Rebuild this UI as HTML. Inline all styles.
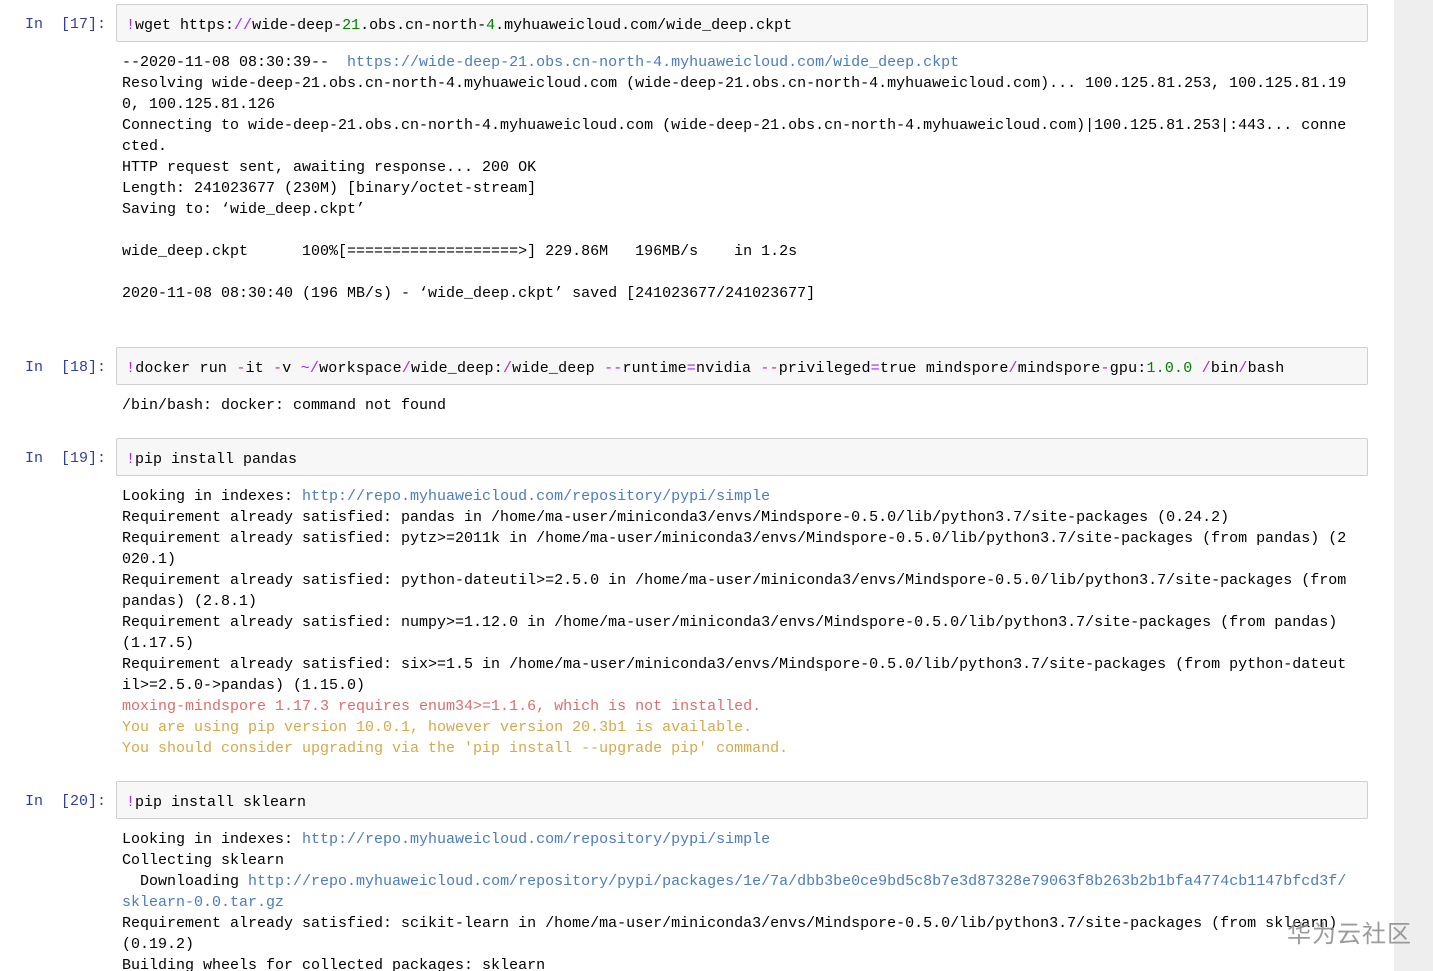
<!DOCTYPE html>
<html><head><meta charset="utf-8"><style>
html,body{margin:0;padding:0;background:#fff;width:1433px;height:971px;overflow:hidden;position:relative}
.mono{font-family:"Liberation Mono","Noto Sans CJK SC",monospace;font-size:15px;color:#000;white-space:pre}
.prompt{position:absolute;left:0;width:106px;text-align:right;color:#303f9f;font-family:"Liberation Mono",monospace;font-size:15px;white-space:pre;line-height:21px}
.box{position:absolute;left:116px;width:1250px;height:36px;background:#f7f7f7;border:1px solid #cfcfcf;border-radius:2px}
.box .mono{position:absolute;left:9px;top:10px;line-height:21px}
.out{position:absolute;left:122px;line-height:21px}
.p{color:#aa22ff}.g{color:#008000}.u{color:#4a7cbf}.r{color:#d9534f;opacity:.85}.y{color:#d4a94a}
.side{position:absolute;left:1394px;top:0;width:39px;height:971px;background:#eeeeee}
.wm{position:absolute;left:1287px;top:914px;font-family:"Noto Sans CJK SC",sans-serif;font-size:24px;color:#8a8a8a;opacity:.85;letter-spacing:1px}
</style></head><body>
<div class="side"></div>

<div class="prompt" style="top:14px">In  [17]:</div>
<div class="box" style="top:4px"><div class="mono"><span class="p">!</span>wget https:<span class="p">//</span>wide-deep-<span class="g">21</span>.obs.cn-north-<span class="g">4</span>.myhuaweicloud.com/wide_deep.ckpt</div></div>
<div class="out mono" style="top:52px">--2020-11-08 08:30:39--  <span class="u">https://wide-deep-21.obs.cn-north-4.myhuaweicloud.com/wide_deep.ckpt</span>
Resolving wide-deep-21.obs.cn-north-4.myhuaweicloud.com (wide-deep-21.obs.cn-north-4.myhuaweicloud.com)... 100.125.81.253, 100.125.81.19
0, 100.125.81.126
Connecting to wide-deep-21.obs.cn-north-4.myhuaweicloud.com (wide-deep-21.obs.cn-north-4.myhuaweicloud.com)|100.125.81.253|:443... conne
cted.
HTTP request sent, awaiting response... 200 OK
Length: 241023677 (230M) [binary/octet-stream]
Saving to: ‘wide_deep.ckpt’

wide_deep.ckpt      100%[===================>] 229.86M   196MB/s    in 1.2s

2020-11-08 08:30:40 (196 MB/s) - ‘wide_deep.ckpt’ saved [241023677/241023677]</div>

<div class="prompt" style="top:357px">In  [18]:</div>
<div class="box" style="top:347px"><div class="mono" style="letter-spacing:0.19px"><span class="p">!</span>docker run <span class="p">-</span>it <span class="p">-</span>v <span class="p">~/</span>workspace<span class="p">/</span>wide_deep:<span class="p">/</span>wide_deep <span class="p">--</span>runtime<span class="p">=</span>nvidia <span class="p">--</span>privileged<span class="p">=</span>true mindspore<span class="p">/</span>mindspore<span class="p">-</span>gpu:<span class="g">1.0.0</span> <span class="p">/</span>bin<span class="p">/</span>bash</div></div>
<div class="out mono" style="top:395px">/bin/bash: docker: command not found</div>

<div class="prompt" style="top:448px">In  [19]:</div>
<div class="box" style="top:438px"><div class="mono"><span class="p">!</span>pip install pandas</div></div>
<div class="out mono" style="top:486px">Looking in indexes: <span class="u">http://repo.myhuaweicloud.com/repository/pypi/simple</span>
Requirement already satisfied: pandas in /home/ma-user/miniconda3/envs/Mindspore-0.5.0/lib/python3.7/site-packages (0.24.2)
Requirement already satisfied: pytz>=2011k in /home/ma-user/miniconda3/envs/Mindspore-0.5.0/lib/python3.7/site-packages (from pandas) (2
020.1)
Requirement already satisfied: python-dateutil>=2.5.0 in /home/ma-user/miniconda3/envs/Mindspore-0.5.0/lib/python3.7/site-packages (from
pandas) (2.8.1)
Requirement already satisfied: numpy>=1.12.0 in /home/ma-user/miniconda3/envs/Mindspore-0.5.0/lib/python3.7/site-packages (from pandas)
(1.17.5)
Requirement already satisfied: six>=1.5 in /home/ma-user/miniconda3/envs/Mindspore-0.5.0/lib/python3.7/site-packages (from python-dateut
il>=2.5.0->pandas) (1.15.0)
<span class="r">moxing-mindspore 1.17.3 requires enum34>=1.1.6, which is not installed.</span>
<span class="y">You are using pip version 10.0.1, however version 20.3b1 is available.</span>
<span class="y">You should consider upgrading via the 'pip install --upgrade pip' command.</span></div>

<div class="prompt" style="top:791px">In  [20]:</div>
<div class="box" style="top:781px"><div class="mono"><span class="p">!</span>pip install sklearn</div></div>
<div class="out mono" style="top:829px">Looking in indexes: <span class="u">http://repo.myhuaweicloud.com/repository/pypi/simple</span>
Collecting sklearn
  Downloading <span class="u">http://repo.myhuaweicloud.com/repository/pypi/packages/1e/7a/dbb3be0ce9bd5c8b7e3d87328e79063f8b263b2b1bfa4774cb1147bfcd3f/</span>
<span class="u">sklearn-0.0.tar.gz</span>
Requirement already satisfied: scikit-learn in /home/ma-user/miniconda3/envs/Mindspore-0.5.0/lib/python3.7/site-packages (from sklearn)
(0.19.2)
Building wheels for collected packages: sklearn</div>

<div class="wm">华为云社区</div>
</body></html>
